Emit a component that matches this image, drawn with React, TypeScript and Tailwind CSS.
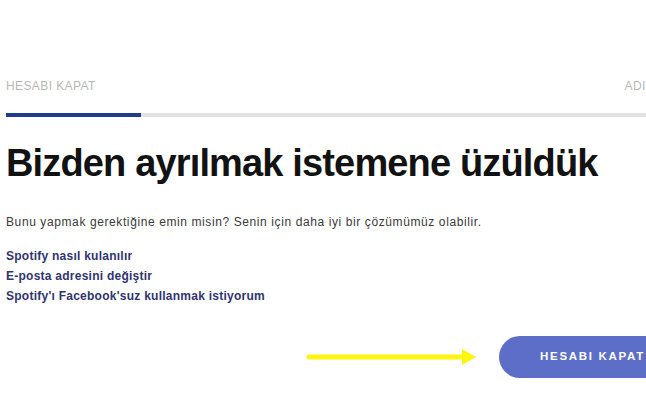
import React from 'react';

const links = [
  'Spotify nasıl kulanılır',
  'E-posta adresini değiştir',
  "Spotify'ı Facebook'suz kullanmak istiyorum",
];

export default function App() {
  return (
    <div className="w-[646px] h-[416px] overflow-hidden bg-white" style={{ fontFamily: '"Liberation Sans", Arial, sans-serif' }}>
      <div className="w-[675px] pl-[6px] pt-[79px]">
        {/* Steps */}
        <div className="flex justify-between text-[12px] leading-[14px] text-[#b8b8b8] tracking-[0.4px]">
          <span>HESABI KAPAT</span>
          <span className="mr-[8px]">ADIM 2</span>
        </div>
        <div className="mt-[20px] flex h-[4px] bg-[#e2e2e2]">
          <div className="w-[135px] bg-[#213b8f]" />
        </div>

        {/* Title */}
        <h1 className="mt-[24px] text-[38px] leading-[44px] font-bold text-[#121212] tracking-[-0.85px]">
          Bizden ayrılmak istemene üzüldük
        </h1>

        <p className="mt-[30px] text-[12px] leading-[14px] text-[#3a3a3a] tracking-[0.6px]">
          Bunu yapmak gerektiğine emin misin? Senin için daha iyi bir çözümümüz olabilir.
        </p>

        <div className="mt-[20px] flex flex-col gap-[6px]">
          {links.map((l) => (
            <a key={l} className="text-[12px] leading-[14px] font-bold text-[#2f3472] tracking-[0.25px]">
              {l}
            </a>
          ))}
        </div>

        {/* Action */}
        <div className="mt-[33px] flex items-center justify-end">
          <svg width="180" height="20" viewBox="0 0 180 20" className="mr-[14px]">
            <line x1="4" y1="10" x2="162" y2="10" stroke="#fbf50f" strokeWidth="5" strokeLinecap="round" />
            <polygon points="157,2 171,10 157,18" fill="#fbf50f" />
          </svg>
          <button className="h-[42px] rounded-full bg-[#5d6ec8] pl-[41px] pr-[30px] text-[11.5px] font-bold tracking-[1.7px] text-white">
            HESABI KAPAT
          </button>
        </div>
      </div>
    </div>
  );
}
